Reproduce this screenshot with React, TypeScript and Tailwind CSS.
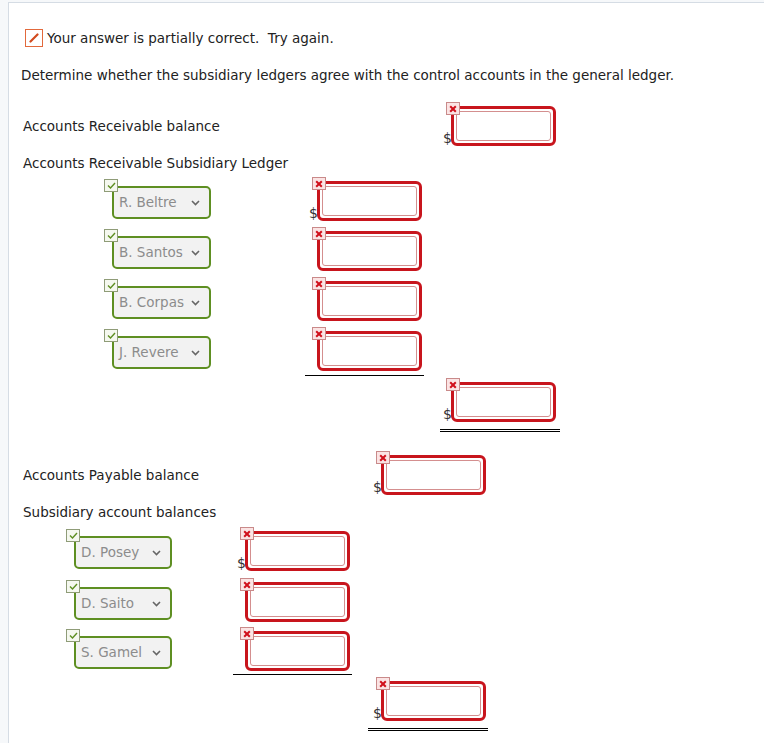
import React from 'react'

const arNames = ['R. Beltre', 'B. Santos', 'B. Corpas', 'J. Revere']
const apNames = ['D. Posey', 'D. Saito', 'S. Gamel']

function ErrBadge() {
  return (
    <span className="absolute -left-[5px] -top-[4px] flex h-[13px] w-[14px] items-center justify-center border border-[#c98a8a] bg-[#fbe4e4]">
      <svg width="8" height="8" viewBox="0 0 8 8">
        <path d="M1.2 1.2L6.8 6.8M6.8 1.2L1.2 6.8" stroke="#d0101b" strokeWidth="2" />
      </svg>
    </span>
  )
}

function OkBadge() {
  return (
    <span className="absolute -left-[8px] -top-[7px] flex h-[13px] w-[14px] items-center justify-center border border-[#8f9c78] bg-[#f5f8ef]">
      <svg width="9" height="7" viewBox="0 0 9 7">
        <path d="M1 3.5L3.5 6L8 1" fill="none" stroke="#5e8f22" strokeWidth="1.4" />
      </svg>
    </span>
  )
}

function MoneyInput({ dollar }: { dollar?: boolean }) {
  return (
    <div className="relative h-[40px] w-[105px]">
      {dollar && (
        <span className="absolute -left-[8px] bottom-[1px] text-[14px] leading-none text-[#333]">$</span>
      )}
      <div className="h-full w-full rounded-[6px] border-[3px] border-[#c8151d] bg-white p-[2px]">
        <div className="h-full w-full rounded-[3px] border border-[#d48f8f]" />
      </div>
      <ErrBadge />
    </div>
  )
}

function Pick({ label, width }: { label: string; width: string }) {
  return (
    <div className="relative mt-[5px]">
      <div
        className={`flex h-[33px] ${width} items-center justify-between rounded-[5px] border-2 border-[#5e8f22] bg-[#f2f2f2] pl-[5px] pr-[9px] text-[13.5px] text-[#8c8c8c]`}
      >
        <span>{label}</span>
        <svg width="9" height="6" viewBox="0 0 9 6">
          <path d="M1 1L4.5 4.5L8 1" fill="none" stroke="#666" strokeWidth="1.6" />
        </svg>
      </div>
      <OkBadge />
    </div>
  )
}

export default function App() {
  return (
    <div className="min-h-[743px] bg-[#f6f8fa] pl-[8px] pt-[2px] font-['DejaVu_Sans',Verdana,sans-serif]">
      <div className="min-h-[741px] border-l border-t border-[#d5dce4] bg-white pl-[12px] pt-[25px] text-[13.5px] text-[#222]">
        {/* feedback */}
        <div className="ml-[4px] flex h-[20px] items-center gap-[4px]">
          <span className="flex h-[18px] w-[18px] items-center justify-center border-[1.5px] border-[#e2693c]">
            <svg width="10" height="10" viewBox="0 0 10 10">
              <path d="M1.5 8.5L8.5 1.5" stroke="#d24a1f" strokeWidth="2.2" strokeLinecap="round" />
            </svg>
          </span>
          <span>Your answer is partially correct.&nbsp; Try again.</span>
        </div>

        <div className="mt-[17px] leading-[20px]">
          Determine whether the subsidiary ledgers agree with the control accounts in the general ledger.
        </div>

        {/* receivables */}
        <div className="mt-[21px] flex items-center">
          <div className="w-[419px] pl-[2px]">Accounts Receivable balance</div>
          <div className="w-[120px] pl-[11px]">
            <MoneyInput dollar />
          </div>
        </div>

        <div className="mt-[7px] pl-[2px] leading-[20px]">Accounts Receivable Subsidiary Ledger</div>

        {arNames.map((n, i) => (
          <div key={n} className={`${i === 0 ? 'mt-[8px]' : 'mt-[10px]'} flex items-start`}>
            <div className="w-[284px] pl-[91px]">
              <Pick label={n} width="w-[99px]" />
            </div>
            <div className="w-[119px] pl-[12px]">
              <MoneyInput dollar={i === 0} />
            </div>
          </div>
        ))}
        <div className="ml-[284px] mt-[4px] w-[119px] border-t border-black" />

        <div className="ml-[419px] mt-[6px] w-[120px] pl-[11px]">
          <MoneyInput dollar />
        </div>
        <div className="ml-[419px] mt-[7px] h-[3px] w-[120px] border-y border-black" />

        {/* payables */}
        <div className="mt-[23px] flex items-center">
          <div className="w-[347px] pl-[2px]">Accounts Payable balance</div>
          <div className="w-[120px] pl-[13px]">
            <MoneyInput dollar />
          </div>
        </div>

        <div className="mt-[7px] pl-[2px] leading-[20px]">Subsidiary account balances</div>

        {apNames.map((n, i) => (
          <div key={n} className={`${i === 0 ? 'mt-[9px]' : i === 1 ? 'mt-[11px]' : 'mt-[9px]'} flex items-start`}>
            <div className="w-[212px] pl-[53px]">
              <Pick label={n} width="w-[98px]" />
            </div>
            <div className="w-[119px] pl-[12px]">
              <MoneyInput dollar={i === 0} />
            </div>
          </div>
        ))}
        <div className="ml-[212px] mt-[3px] w-[119px] border-t border-black" />

        <div className="ml-[347px] mt-[6px] w-[120px] pl-[13px]">
          <MoneyInput dollar />
        </div>
        <div className="ml-[347px] mt-[7px] h-[3px] w-[120px] border-y border-black" />
      </div>
    </div>
  )
}
